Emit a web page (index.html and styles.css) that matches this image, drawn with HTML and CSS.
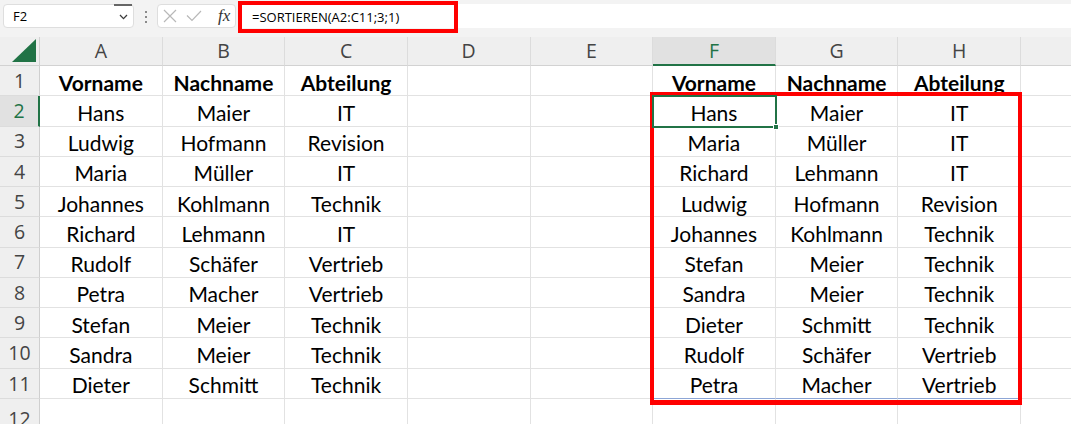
FILE: index.html
```html
<!DOCTYPE html>
<html lang="de">
<head>
    <meta charset="UTF-8">
    <meta name="viewport" content="width=device-width, initial-scale=1.0">
    <title>Mappe1 - SORTIEREN</title>
    <link rel="stylesheet" href="styles.css">
</head>
<body>
    <!-- Name box, buttons and formula field -->
    <div class="formula-bar">
        <div class="name-box">
            <span class="name-text">F2</span>
            <span class="name-drop">
                <svg width="9" height="6" viewBox="0 0 9 6"><polyline points="1,1 4.5,4.6 8,1" fill="none" stroke="#3c3c3c" stroke-width="1.3"/></svg>
            </span>
        </div>
        <div class="grip"><i></i><i></i><i></i></div>
        <div class="fx-box">
            <svg class="btn-cancel" width="14" height="14" viewBox="0 0 14 14"><path d="M1 1 L13 13 M13 1 L1 13" stroke="#b8b8b8" stroke-width="1.2"/></svg>
            <svg class="btn-enter" width="16" height="12" viewBox="0 0 16 12"><path d="M1 5.5 L6 10.5 L15 1" fill="none" stroke="#b8b8b8" stroke-width="1.2"/></svg>
            <span class="fx">fx</span>
        </div>
        <div class="formula-field">
            <span class="formula-text">=SORTIEREN(A2:C11;3;1)</span>
        </div>
    </div>

    <!-- Worksheet grid with the selection / spill marks laid on top -->
    <div class="sheet-wrap">
        <div class="sheet" id="sheet"></div>
        <div class="marks">
            <div class="spill-box"></div>
            <div class="active-cell"></div>
        </div>
    </div>

    <script>
        document.addEventListener("DOMContentLoaded", function() {
            var sheet = document.getElementById("sheet");
            // last column is only partly in view, its letter sits off screen
            var letters = ["A", "B", "C", "D", "E", "F", "G", "H", ""];

            var data = [
                ["Hans", "Maier", "IT"],
                ["Ludwig", "Hofmann", "Revision"],
                ["Maria", "Müller", "IT"],
                ["Johannes", "Kohlmann", "Technik"],
                ["Richard", "Lehmann", "IT"],
                ["Rudolf", "Schäfer", "Vertrieb"],
                ["Petra", "Macher", "Vertrieb"],
                ["Stefan", "Meier", "Technik"],
                ["Sandra", "Meier", "Technik"],
                ["Dieter", "Schmitt", "Technik"]
            ];
            var head = ["Vorname", "Nachname", "Abteilung"];

            // =SORTIEREN(A2:C11;3;1) -> sort by Abteilung, ascending (stable)
            var sorted = data.slice().sort(function(a, b) {
                return a[2] < b[2] ? -1 : (a[2] > b[2] ? 1 : 0);
            });

            function add(cls, text) {
                var div = document.createElement("div");
                div.className = cls;
                if (text) div.textContent = text;
                sheet.appendChild(div);
                return div;
            }

            // column header row
            var corner = add("corner");
            corner.innerHTML = '<svg width="24" height="23" viewBox="0 0 24 23"><polygon points="24,0 24,23 0,23" fill="#217346"/></svg>';
            letters.forEach(function(l) {
                add(l == "F" ? "col-head sel" : "col-head", l);
            });

            for (var r = 1; r <= 12; r++) {
                add(r == 2 ? "row-head sel" : "row-head", String(r));
                for (var c = 0; c < letters.length; c++) {
                    var text = "";
                    var cls = "cell";
                    if (r <= 11 && c <= 2) {
                        text = r == 1 ? head[c] : data[r - 2][c];
                    }
                    if (r <= 11 && c >= 5 && c <= 7) {
                        text = r == 1 ? head[c - 5] : sorted[r - 2][c - 5];
                        if (r == 11) cls += " spill-bottom";
                        if (r >= 2 && c == 7) cls += " spill-right";
                    }
                    if (r == 1) cls += " bold";
                    add(cls, text);
                }
            }
        });
    </script>
</body>
</html>
```

FILE: styles.css
```css
body {
    margin: 0;
    width: 1071px;
    height: 424px;
    overflow: hidden;
    background-color: #fff;
    font-family: "Open Sans", "Noto Sans", sans-serif;
    color: #000;
}

/* Formula bar */
.formula-bar {
    display: flex;
    align-items: flex-start;
    height: 37px;
    padding-top: 4px;
    box-sizing: border-box;
    background-color: #f3f3f3;
}

.name-box {
    display: flex;
    align-items: stretch;
    width: 131px;
    height: 24px;
    margin-left: 3px;
    box-sizing: border-box;
    background-color: #fff;
    border: 1px solid #dedede;
    border-radius: 4px;
}

.name-text {
    flex: 1;
    padding-left: 9px;
    font-size: 13px;
    line-height: 22px;
}

.name-drop {
    display: flex;
    align-items: center;
    justify-content: center;
    width: 18px;
    margin-right: 1px;
    border-top: 2px solid #666;
    margin-top: -1px;
}

.grip {
    display: flex;
    flex-direction: column;
    align-items: center;
    gap: 3px;
    width: 23px;
    padding-top: 7px;
}

.grip i {
    display: block;
    width: 2px;
    height: 2px;
    background-color: #8a8a8a;
}

.fx-box {
    display: flex;
    align-items: center;
    width: 79px;
    height: 24px;
    box-sizing: border-box;
    background-color: #fff;
    border: 1px solid #dedede;
    border-radius: 4px;
}

.btn-cancel {
    margin-left: 5px;
}

.btn-enter {
    margin-left: 9px;
}

.fx {
    margin-left: 16px;
    font-family: "Liberation Serif", serif;
    font-style: italic;
    font-size: 17px;
    color: #333;
    line-height: 20px;
}

.formula-field {
    flex: 1;
    display: flex;
    height: 24px;
    margin-left: 2px;
    background-color: #fff;
}

/* red frame around the formula */
.formula-text {
    width: 220px;
    margin: -3px 0 -5px 0;
    padding-left: 10px;
    box-sizing: border-box;
    border: 4px solid #f00;
    font-size: 13px;
    line-height: 24px;
}

/* Worksheet */
.sheet-wrap {
    display: grid;
    width: 1071px;
    overflow: hidden;
}

.sheet,
.marks {
    grid-area: 1 / 1;
    display: grid;
    grid-template-columns: 40px repeat(9, 122.625px);
    grid-template-rows: 29px repeat(11, 30.27px) 40px;
}

.marks {
    pointer-events: none;
}

.corner,
.col-head,
.row-head {
    background-color: #efefef;
    color: #444;
    font-size: 19.5px;
    box-sizing: border-box;
}

.corner {
    display: flex;
    align-items: flex-end;
    justify-content: flex-end;
    padding: 0 3px 3px 0;
    border-right: 1px solid #d2d2d2;
    border-bottom: 1px solid #d2d2d2;
}

.col-head {
    display: flex;
    align-items: center;
    justify-content: center;
    border-right: 1px solid #dcdcdc;
    border-bottom: 1px solid #d2d2d2;
    line-height: 1;
}

.row-head {
    display: flex;
    align-items: center;
    justify-content: center;
    border-right: 1px solid #cfcfcf;
    border-bottom: 1px solid #dcdcdc;
    line-height: 1;
}

.col-head.sel {
    background-color: #e1e1e1;
    color: #217346;
    border-bottom: 2px solid #217346;
}

.row-head.sel {
    background-color: #e1e1e1;
    color: #217346;
    border-right: 2px solid #217346;
}

.cell {
    display: flex;
    align-items: center;
    justify-content: center;
    padding-top: 3px;
    box-sizing: border-box;
    border-right: 1px solid #e2e2e2;
    border-bottom: 1px solid #e2e2e2;
    font-family: "Lato", sans-serif;
    font-size: 21px;
    line-height: 1;
    white-space: nowrap;
}

.cell.bold {
    font-weight: bold;
}

/* spill range outline of the SORTIEREN result */
.cell.spill-bottom {
    border-bottom-color: #8da6d6;
}

.cell.spill-right {
    border-right-color: #8da6d6;
}

.active-cell {
    grid-area: 3 / 7 / 4 / 8;
    position: relative;
    margin: -1px -1px -1px -1px;
    border: 2px solid #217346;
}

.active-cell::after {
    content: "";
    position: absolute;
    right: -4px;
    bottom: -4px;
    width: 4px;
    height: 4px;
    background-color: #217346;
    border: 1px solid #fff;
}

.spill-box {
    grid-area: 3 / 7 / 13 / 10;
    margin: -4px -1px -6px -3px;
    border: 4px solid #f00;
    border-bottom-width: 5px;
}
```
